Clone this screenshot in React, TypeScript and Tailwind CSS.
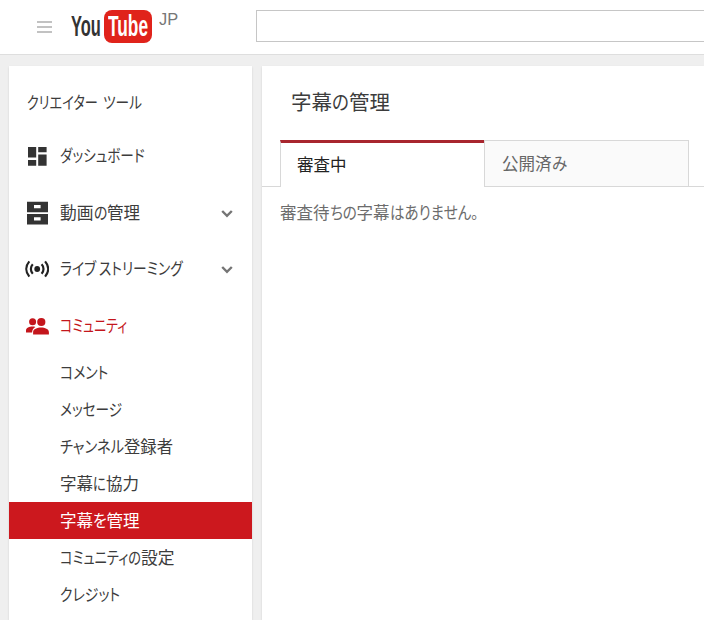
import { useLayoutEffect, useRef, type ReactNode } from "react";

/** A run of text: its string and the width in pixels that it takes up. */
type Run = [text: string, width: number];

function Fit({ text, width }: { text: string; width: number }) {
  const ref = useRef<HTMLSpanElement>(null);
  useLayoutEffect(() => {
    const el = ref.current;
    if (el) el.style.transform = `scaleX(${width / el.offsetWidth})`;
  }, [text, width]);
  return (
    <span className="inline-block shrink-0" style={{ width }}>
      <span ref={ref} className="inline-block origin-left whitespace-pre">
        {text}
      </span>
    </span>
  );
}

function Label({ runs, className = "" }: { runs: Run[]; className?: string }) {
  return (
    <span className={`flex whitespace-nowrap ${className}`}>
      {runs.map(([text, width], i) => (
        <Fit key={i} text={text} width={width} />
      ))}
    </span>
  );
}

function DashboardIcon() {
  return (
    <svg width="24" height="24" viewBox="0 0 24 24" fill="#333">
      <path d="M3 3h8.2v10.6H3zM13.2 3h8.4v5.3h-8.4zM3 16h8.2v5.8H3zM13.2 10.4h8.4v11.4h-8.4z" />
    </svg>
  );
}

function DrawersIcon() {
  return (
    <svg width="24" height="24" viewBox="0 0 24 24" fill="#333" fillRule="evenodd">
      <path d="M2 .8h21v10.400H2zM9 4v3.200h6.600V4zM2 13h21v10.400H2zM9 16.200v3.200h6.600v-3.200z" />
    </svg>
  );
}

function LiveIcon() {
  return (
    <svg width="24" height="24" viewBox="0 0 24 24" fill="none" stroke="#222" strokeWidth="2.2">
      <circle cx="12.2" cy="12" r="2.9" fill="#222" stroke="none" />
      <path d="M7.8 7.2a7 7 0 0 0 0 9.6M16.6 7.2a7 7 0 0 1 0 9.6M4.3 4.4c-4 4.7-4 10.5 0 15.2M20.1 4.4c4 4.7 4 10.5 0 15.2" />
    </svg>
  );
}

function PeopleIcon() {
  return (
    <svg width="24" height="24" viewBox="0 0 24 24" fill="#c4161c">
      <circle cx="7.6" cy="7.8" r="3.5" />
      <circle cx="16.3" cy="8" r="4.1" />
      <path d="M1 18.600v-2c0-2.700 3.300-4 6.600-4 1 0 1.900.1 2.800.3-2 1.100-3.300 2.900-3.300 5.700zM8.100 20.600v-2.400c0-3.200 4.200-4.700 8-4.700s7.800 1.500 7.800 4.700v2.400z" />
    </svg>
  );
}

function Chevron() {
  return (
    <svg className="mr-[18px] ml-auto" width="14" height="10" viewBox="0 0 14 10" fill="none" stroke="#757575" strokeWidth="2.4">
      <path d="M2.200 3L7 7.800l4.800-4.800" />
    </svg>
  );
}

const nav: { icon: ReactNode; runs: Run[]; more?: boolean; active?: boolean }[] = [
  { icon: <DashboardIcon />, runs: [["ダッシュボード", 85]] },
  { icon: <DrawersIcon />, runs: [["動画", 33.5], ["の", 13.5], ["管理", 33]], more: true },
  { icon: <LiveIcon />, runs: [["ライブ", 36], [" ", 3], ["ストリーミング", 84]], more: true },
  { icon: <PeopleIcon />, runs: [["コミュニティ", 67]], active: true },
];

const community: { runs: Run[]; active?: boolean }[] = [
  { runs: [["コメント", 48]] },
  { runs: [["メッセージ", 62]] },
  { runs: [["チャンネル", 64], ["登録者", 49.5]] },
  { runs: [["字幕", 33], ["に", 13], ["協力", 33]] },
  { runs: [["字幕", 33], ["を", 13.5], ["管理", 33]], active: true },
  { runs: [["コミュニティの", 81], ["設定", 33.5]] },
  { runs: [["クレジット", 60]] },
];

function Header() {
  return (
    <header className="flex h-[55px] shrink-0 border-b border-[#dedede] bg-white">
      <div className="mt-[21px] ml-[37px] flex h-[12px] w-[15px] flex-col justify-between">
        <i className="h-[2px] bg-[#c2c2c2]" />
        <i className="h-[2px] bg-[#c2c2c2]" />
        <i className="h-[2px] bg-[#c2c2c2]" />
      </div>
      <div className="mt-[10px] ml-[19px] flex h-[33px] font-['Liberation_Sans'] text-[29px] leading-[32px] font-bold text-[#333]">
        <Fit text="You" width={30} />
        <div className="ml-[3px] flex w-[48px] rounded-[8px] bg-[#e0231b] pl-[4px] text-white">
          <Fit text="Tube" width={40} />
        </div>
      </div>
      <span className="mt-[10px] ml-[7px] w-[20px] font-['Liberation_Sans'] text-[16px] leading-[20px] text-[#777]">
        <Fit text="JP" width={19.5} />
      </span>
      <div className="mt-[10px] ml-[77px] h-[32px] flex-1 border border-r-0 border-[#c6c6c6] bg-white" />
    </header>
  );
}

function Sidebar() {
  return (
    <aside className="w-[243px] shrink-0 bg-white shadow-[0_1px_2px_rgba(0,0,0,0.12)]">
      <div className="flex h-[62px] items-center pt-[9px] pl-[18px]">
        <Label runs={[["クリエイター", 71], [" ", 5], ["ツール", 39]]} />
      </div>
      {nav.map((item, i) => (
        <div key={i} className={`flex h-[56.6px] items-center pl-[16px] ${item.active ? "text-[#c4161c]" : ""}`}>
          {item.icon}
          <Label runs={item.runs} className="ml-[11px] pb-[2px]" />
          {item.more && <Chevron />}
        </div>
      ))}
      {community.map((item, i) => (
        <div
          key={i}
          className={`flex h-[37px] items-center pb-[2px] pl-[51px] ${item.active ? "bg-[#cc181e] text-white" : ""}`}
        >
          <Label runs={item.runs} />
        </div>
      ))}
    </aside>
  );
}

function Main() {
  return (
    <main className="flex-1 bg-white shadow-[0_1px_2px_rgba(0,0,0,0.12)]">
      <h1 className="flex h-[74px] items-center pb-[4px] pl-[29px] text-[20.5px]">
        <Label runs={[["字幕", 41], ["の", 17], ["管理", 41]]} />
      </h1>
      <div className="flex h-[47px]">
        <div className="w-[18px] border-b border-[#d8d8d8]" />
        <div className="flex w-[204px] items-center border-t-[3px] border-l border-t-[#a8262e] border-l-[#d8d8d8] pb-[3px] pl-[16px] text-[#222]">
          <Label runs={[["審査中", 50]]} />
        </div>
        <div className="flex w-[205px] items-center border border-[#d8d8d8] bg-[#fafafa] pb-[2px] pl-[17px] text-[#666]">
          <Label runs={[["公開済", 50], ["み", 15]]} />
        </div>
        <div className="flex-1 border-b border-[#d8d8d8]" />
      </div>
      <div className="mt-[13px] flex pl-[18px] leading-[24px] text-[#6c6c6c]">
        <Label
          runs={[["審査待", 50], ["ちの", 26.5], ["字幕", 33], ["はありません", 81], ["。", 7]]}
        />
      </div>
    </main>
  );
}

export default function App() {
  return (
    <div className="flex h-[620px] w-[704px] flex-col overflow-hidden bg-[#efefef] font-['Noto_Sans_CJK_JP',sans-serif] text-[16.5px] leading-[24px] text-[#3c3c3c] [font-feature-settings:'palt']">
      <Header />
      <div className="flex min-h-0 flex-1 gap-[10px] pt-[11px] pl-[9px]">
        <Sidebar />
        <Main />
      </div>
    </div>
  );
}
